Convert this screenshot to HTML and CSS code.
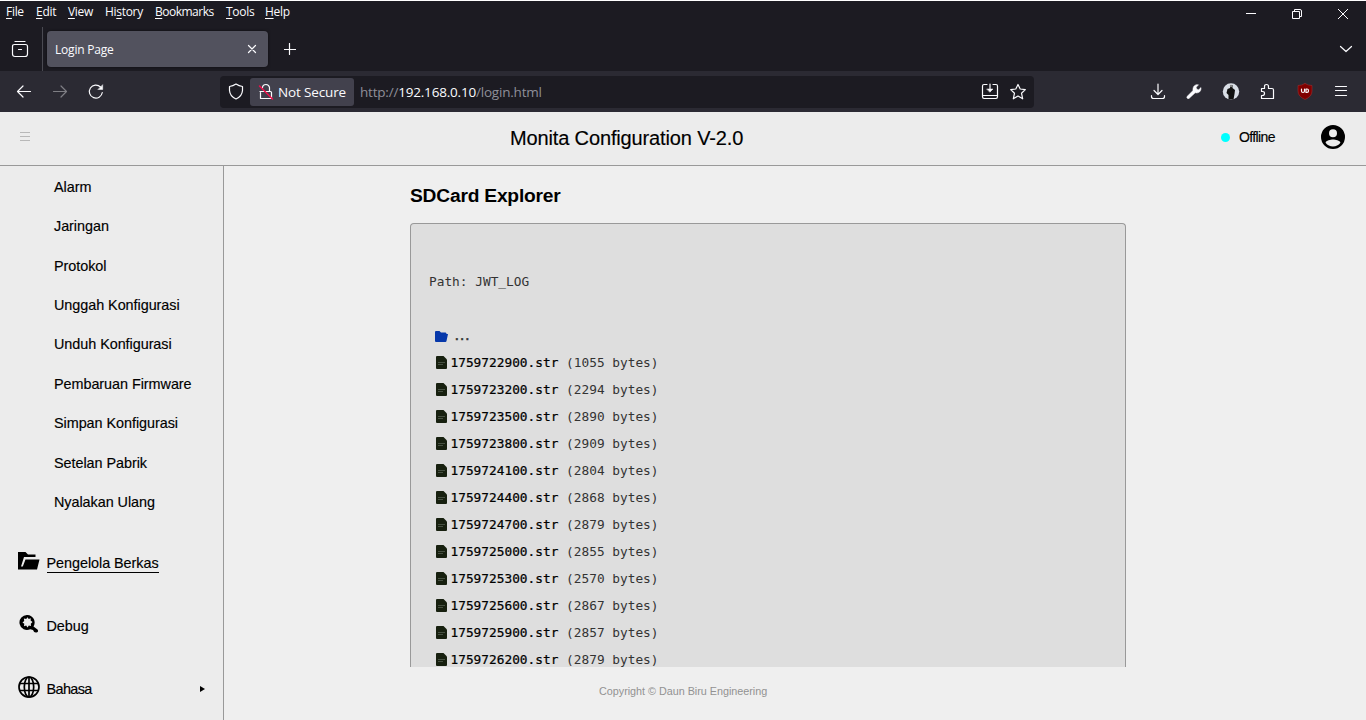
FILE: index.html
```html
<!DOCTYPE html>
<html lang="id">
<head>
<meta charset="utf-8">
<title>Login Page</title>
<link rel="stylesheet" href="styles.css">
</head>
<body>
<div class="browser">
  <div class="menubar">
    <nav class="menus">
      <span class="w-file"><u>F</u>ile</span><span class="w-edit"><u>E</u>dit</span><span class="w-view"><u>V</u>iew</span><span class="w-history">Hi<u>s</u>tory</span><span class="w-bookmarks"><u>B</u>ookmarks</span><span class="w-tools"><u>T</u>ools</span><span><u>H</u>elp</span>
    </nav>
    <div class="window-buttons">
      <svg width="12" height="12" viewBox="0 0 12 12"><path d="M1 5.500H11"/></svg>
      <svg width="12" height="12" viewBox="0 0 12 12"><path d="M1.500 3.500H8.500V10.500H1.500ZM3.500 3V1.500H9Q10.500 1.500 10.500 3V8.500H9"/></svg>
      <svg width="12" height="12" viewBox="0 0 12 12"><path d="M1 1 11 11M11 1 1 11"/></svg>
    </div>
  </div>
  <div class="tabs">
    <div class="recent"><svg width="18" height="18" viewBox="0 0 18 18"><path d="M4 1.500H14M3.500 4.500H14.500Q16.500 4.500 16.500 6.500V14Q16.500 16.500 14 16.500H4Q1.500 16.500 1.500 14V6.500Q1.500 4.500 3.500 4.500ZM7.500 9.500H10.500"/></svg></div>
    <div class="tab"><span>Login Page</span><svg width="10" height="10" viewBox="0 0 10 10"><path d="M1.500 1.500 8.500 8.500M8.500 1.500 1.500 8.500"/></svg></div>
    <svg class="plus" width="12" height="12" viewBox="0 0 12 12"><path d="M5.500 .5V11.500M.5 6.500H11.500"/></svg>
    <svg class="chevron" width="14" height="8" viewBox="0 0 14 8"><path d="M1.500 1.500 7 6.500 12.500 1.500"/></svg>
  </div>
  <div class="toolbar">
    <div class="navigation">
      <svg width="16" height="16" viewBox="0 0 16 16"><path d="M14.500 7.500H1.500M7 2 1.500 7.500 7 13"/></svg>
      <svg class="muted" width="16" height="16" viewBox="0 0 16 16"><path d="M1.500 7.500H14.500M9 2 14.500 7.500 9 13"/></svg>
      <svg width="16" height="16" viewBox="0 0 16 16"><path d="M14.300 8.500A6.500 6.500 0 1 1 12.500 3"/><path class="solid" d="M14.700 1V5.500H10.200Z"/></svg>
    </div>
    <div class="address">
      <svg class="shield" width="16" height="18" viewBox="0 0 16 18"><path d="M8 1Q11 3 14.500 3.500V7.500Q14 13.500 8 16 2 13.500 1.500 7.500V3.500Q5 3 8 1Z"/></svg>
      <div class="security"><svg width="16" height="18" viewBox="0 0 16 18"><path d="M4.500 5V4Q5 1.500 8 1.500T11.500 4.500V8.500M2 8.500H12.500Q13.500 8.500 13.500 9.500V15.500H2.500V9.500"/><path class="slash" d="M1.500 3 14.500 16"/></svg><span>Not Secure</span></div>
      <div class="url">http://<b>192.168.0.10</b>/login.html</div>
      <svg class="install" width="18" height="18" viewBox="0 0 18 18"><path d="M6 1.500H3Q1.500 1.500 1.500 3V13.500Q1.500 15.500 3 15.500H15Q16.500 15.500 16.500 13.500V3Q16.500 1.500 15 1.500H12M2 12.500H16M9 1V8"/><path class="solid" d="M6 6H12L9 9Z"/></svg>
      <svg width="18" height="18" viewBox="0 0 18 18"><path d="M9 1.500 11.200 6 16.300 6.600 12.500 10.200 13.700 15.800 9 13 4.300 15.800 5.500 10.200 1.700 6.600 6.800 6Z"/></svg>
    </div>
    <div class="extensions">
      <svg width="18" height="18" viewBox="0 0 18 18"><path d="M9 1V11M5 7.500 9 11.500 13 7.500M2.500 12.500V13.500Q2.500 15.500 4.500 15.500H13.500Q15.500 15.500 15.500 13.500V12.500"/></svg>
      <svg width="18" height="18" viewBox="0 0 18 18"><path class="solid" d="M2 13.500 8 7.500C7.500 3.500 10 1 13.500 1.800L11.200 4.300 11.800 6.200 13.700 6.800 16 4.500C16.500 8.500 13.500 10.500 10.200 9.800L4 15.500Q2.500 16 2 15Z"/></svg>
      <svg width="18" height="18" viewBox="0 0 18 18"><circle class="avatar-bg" cx="9" cy="8.500" r="8.200"/><path class="avatar" d="M6.500 16.500V12L4.500 10 5.500 6 8 5 8 2H10.500V5L13 7 12.500 11 11.500 16.500Z"/><circle class="avatar-face" cx="9" cy="3" r="1.200"/></svg>
      <svg width="18" height="18" viewBox="0 0 18 18"><path d="M2.500 5.500H5.500V3.500Q5.500 1.500 7.500 1.500T9.500 3.500V5.500H13Q14.500 5.500 14.500 7V15.500H2.500V12.500H3.500Q5.500 12.500 5.500 10.500T3.500 8.500H2.500Z"/></svg>
      <svg width="18" height="18" viewBox="0 0 18 18"><path class="ublock" d="M9 .5Q12 2.500 16 2.500V8Q16 13.500 9 16.500 2 13.500 2 8V2.500Q6 2.500 9 .5Z"/><path d="M5.500 6V8Q5.500 9.500 7 9.500T8.500 8V6M10 6H11Q12.500 6 12.500 7.700T11 9.500H10Z"/></svg>
      <svg width="18" height="18" viewBox="0 0 18 18"><path d="M3.500 3.500H14.500M3.500 7.500H14.500M3.500 12.500H14.500"/></svg>
    </div>
  </div>
</div>
<header class="app-header">
  <div class="hamburger"><i></i><i></i><i></i></div>
  <h1>Monita Configuration V-2.0</h1>
  <div class="status"><i></i><span>Offline</span></div>
  <svg class="account" width="24" height="24" viewBox="0 0 24 24"><path fill-rule="evenodd" d="M12 0A12 12 0 1 0 12 24 12 12 0 1 0 12 0ZM12 4.200A4 4 0 1 1 12 12.200 4 4 0 1 1 12 4.200ZM12 21.500Q7.500 21.500 4.600 17.700C5 15.600 9.600 14.600 12 14.600S19 15.600 19.400 17.700Q16.500 21.500 12 21.500Z"/></svg>
</header>
<div class="workspace">
  <aside class="sidebar">
    <ul class="submenu"><li>Alarm</li><li>Jaringan</li><li>Protokol</li><li>Unggah Konfigurasi</li><li>Unduh Konfigurasi</li><li>Pembaruan Firmware</li><li>Simpan Konfigurasi</li><li>Setelan Pabrik</li><li>Nyalakan Ulang</li></ul>
    <ul class="main-menu">
      <li><svg width="22" height="20" viewBox="0 0 22 20"><path d="M0 1H7.500L10 3.500H17.500V6H6L3 15.500H4.800L7.500 8.500H21.500L19 18.500H0Z"/></svg><span class="current">Pengelola Berkas</span></li>
      <li><svg width="22" height="20" viewBox="0 0 22 20"><path fill-rule="evenodd" d="M9.500 1A7.500 7.500 0 1 0 12.300 15.200L15 16Q16 19 18.500 18.500T19.500 15.500L15.500 12.500A7.500 7.500 0 0 0 9.500 1ZM9.500 3.200 10.700 5 12.800 4.300 12.600 6.500 14.500 8 12.800 9.700 13 12 10.800 11.600 9.500 13.500 8.200 11.600 6 12.200 6.300 9.800 4.500 8.500 6.200 7 5.900 4.600 8.200 5Z"/></svg><span>Debug</span></li>
      <li><svg class="globe" width="22" height="22" viewBox="0 0 22 22"><circle cx="11" cy="11" r="10"/><ellipse cx="11" cy="11" rx="4.700" ry="10"/><path d="M11 1V21M2 7.500H20M2 14.500H20"/></svg><span class="language">Bahasa</span><svg class="expand" width="5" height="6" viewBox="0 0 5 6"><path d="M0 0 5 3 0 6Z"/></svg></li>
    </ul>
  </aside>
  <main>
    <h2>SDCard Explorer</h2>
    <section class="explorer">
      <div class="path">Path: JWT_LOG</div>
      <div class="parent"><svg width="15" height="13" viewBox="0 0 15 13"><path d="M1 2Q1 1 2 1H5.500L7 2.500H11.500Q12.500 2.500 12.500 4H14L12.500 11Q12.300 12 11.500 12H2Q1 12 1 11Z"/></svg><span>...</span></div>
      <ul class="files" id="files"></ul>
    </section>
    <footer>Copyright © Daun Biru Engineering</footer>
  </main>
</div>
<script src="files.js"></script>
</body>
</html>
```
FILE: styles.css
```css
* { box-sizing: border-box; }
body { margin: 0; width: 1366px; height: 720px; overflow: hidden; background: #efefef; font-family: "Liberation Sans", Arial, sans-serif; color: #000; }
ul { list-style: none; margin: 0; padding: 0; }
svg { display: block; flex: none; }
.browser { height: 112px; background: #1c1b22; border-top: 1px solid #fff; color: #fbfbfe; font-family: "Open Sans", "Noto Sans", sans-serif; }
.browser svg { fill: none; stroke: #fbfbfe; stroke-width: 1.2; stroke-linecap: round; stroke-linejoin: round; }
.browser svg .solid { fill: #fbfbfe; stroke-width: .5; }
.menubar { height: 26px; display: flex; justify-content: space-between; padding-left: 6px; }
.menus { display: flex; font-size: 12px; line-height: 22px; letter-spacing: -.3px; white-space: nowrap; }
.menus u { text-underline-offset: 2px; }
.w-file { width: 30px; }
.w-edit { width: 32px; }
.w-view { width: 37px; }
.w-history { width: 50px; }
.w-bookmarks { width: 71px; letter-spacing: -.5px; }
.w-tools { width: 39px; }
.window-buttons { display: flex; gap: 34px; padding: 7px 17px 0 0; }
.browser .window-buttons svg { stroke-width: 1; stroke-linecap: butt; }
.tabs { display: flex; align-items: center; height: 44px; }
.recent { width: 43px; height: 44px; padding: 13px 0 0 11px; border-right: 1px solid #4a4a52; }
.tab { margin-left: 4px; width: 221px; height: 36px; background: #52525e; border-radius: 4px; display: flex; align-items: center; justify-content: space-between; padding: 0 11px 0 8px; font-size: 12px; letter-spacing: -.2px; box-shadow: 0 0 3px #0008; }
.plus { margin-left: 16px; }
.chevron { margin-left: auto; margin-right: 13px; }
.toolbar { height: 41px; background: #2b2a33; display: flex; align-items: center; }
.navigation { display: flex; gap: 20px; padding-left: 16px; width: 220px; }
.navigation .muted { opacity: .4; }
.address { width: 814px; height: 32px; background: #1c1b22; border-radius: 4px; display: flex; align-items: center; padding: 0 7px 0 8px; }
.security { margin-left: 6px; width: 104px; height: 28px; border-radius: 3px; background: #42414d; display: flex; align-items: center; gap: 4px; padding-left: 8px; font-size: 13.5px; letter-spacing: -.15px; white-space: nowrap; }
.browser .security .slash { stroke: #f0104b; stroke-width: 1.5; }
.url { margin-left: 6px; font-size: 13.5px; letter-spacing: -.2px; color: #8f8f99; }
.url b { font-weight: 400; color: #fbfbfe; }
.install { margin-left: auto; margin-right: 10px; }
.extensions { display: flex; gap: 18.800px; margin-left: 114.500px; }
.browser .avatar-bg { fill: #d9dee6; stroke: none; }
.browser .avatar { fill: #111; stroke: none; }
.browser .avatar-face { fill: #888; stroke: none; }
.browser .ublock { fill: #800000; stroke: #a33; stroke-width: .5; }
.app-header { height: 54px; display: flex; align-items: center; background: #ececec; border-bottom: 1px solid #999; padding: 0 21px 0 20px; }
.hamburger { width: 490px; display: flex; flex-direction: column; gap: 3px; padding-bottom: 5px; }
.hamburger i { width: 10px; height: 1px; background: #b8b8b8; }
h1 { margin: 0; width: 711px; font-size: 20px; font-weight: 400; line-height: 28px; letter-spacing: -.14px; white-space: nowrap; padding-bottom: 1px; -webkit-text-stroke: .15px #000; }
.status { width: 100px; display: flex; align-items: center; gap: 9px; font-size: 14px; letter-spacing: -.62px; padding-bottom: 3px; -webkit-text-stroke: .15px #000; }
.status i { width: 9px; height: 9px; border-radius: 50%; background: #0ff; }
.account { margin-bottom: 3px; }
.workspace { display: flex; height: 554px; }
.sidebar { width: 224px; border-right: 1px solid #999; background: #ececec; font-size: 14.400px; letter-spacing: -.045px; -webkit-text-stroke: .15px #000; }
.submenu { padding: 1.800px 0 0 54px; }
.submenu li { height: 39.400px; line-height: 39.400px; white-space: nowrap; }
.main-menu { padding: 7.500px 18px 0; }
.main-menu li { height: 62.800px; display: flex; align-items: center; gap: 6.500px; }
.main-menu li > span { padding-top: 3px; }
.main-menu .current { border-bottom: 1px solid #000; line-height: 17px; margin-top: 2px; }
.main-menu .language { letter-spacing: -.6px; padding-top: 4px; }
.globe { fill: none; stroke: #000; stroke-width: 1.700; }
.expand { margin: 4px 0 0 auto; }
main { flex: 1; padding-left: 186px; }
h2 { margin: 0; height: 57px; padding-top: 18px; font-size: 19.200px; line-height: 23px; letter-spacing: -.2px; }
.explorer { width: 716px; height: 444px; overflow: hidden; border: 1px solid #999; border-bottom: 0; border-radius: 4px 4px 0 0; background: #dedede; padding: 48px 18px 0; color: #333; font: 12.800px "DejaVu Sans Mono", monospace; }
.path { line-height: 20px; }
.parent { display: flex; align-items: center; gap: 4px; height: 27px; margin: 31px 0 -1px 5px; }
.parent svg { fill: #0638aa; }
.parent span { letter-spacing: -2.500px; padding-bottom: 2px; -webkit-text-stroke: .4px #333; }
.files li { height: 27px; display: flex; align-items: center; padding-left: 7px; white-space: pre; }
.files svg { margin-right: 3.500px; fill: #17200f; }
.files b { font-weight: 400; color: #000; -webkit-text-stroke: .22px #000; }
.files .lines { stroke: #465041; stroke-width: 1; }
footer { width: 716px; padding: 18px 0 0 189px; font-size: 10.800px; line-height: 13px; letter-spacing: -.02px; color: #929292; }
```
FILE: files.js
```javascript
const files = [[1759722900, 1055], [1759723200, 2294], [1759723500, 2890], [1759723800, 2909], [1759724100, 2804], [1759724400, 2868], [1759724700, 2879], [1759725000, 2855], [1759725300, 2570], [1759725600, 2867], [1759725900, 2857], [1759726200, 2879]];
const icon = '<svg width="11" height="13" viewBox="0 0 11 13"><path d="M1 0H7.500L11 3.500V12Q11 13 10 13H1Q0 13 0 12V1Q0 0 1 0Z"/><path class="lines" d="M2 6.500H9M2 8.500H7"/></svg>';
document.getElementById('files').innerHTML = files.map(([name, size]) => `<li>${icon}<b>${name}.str</b><span> (${size} bytes)</span></li>`).join('');
```
